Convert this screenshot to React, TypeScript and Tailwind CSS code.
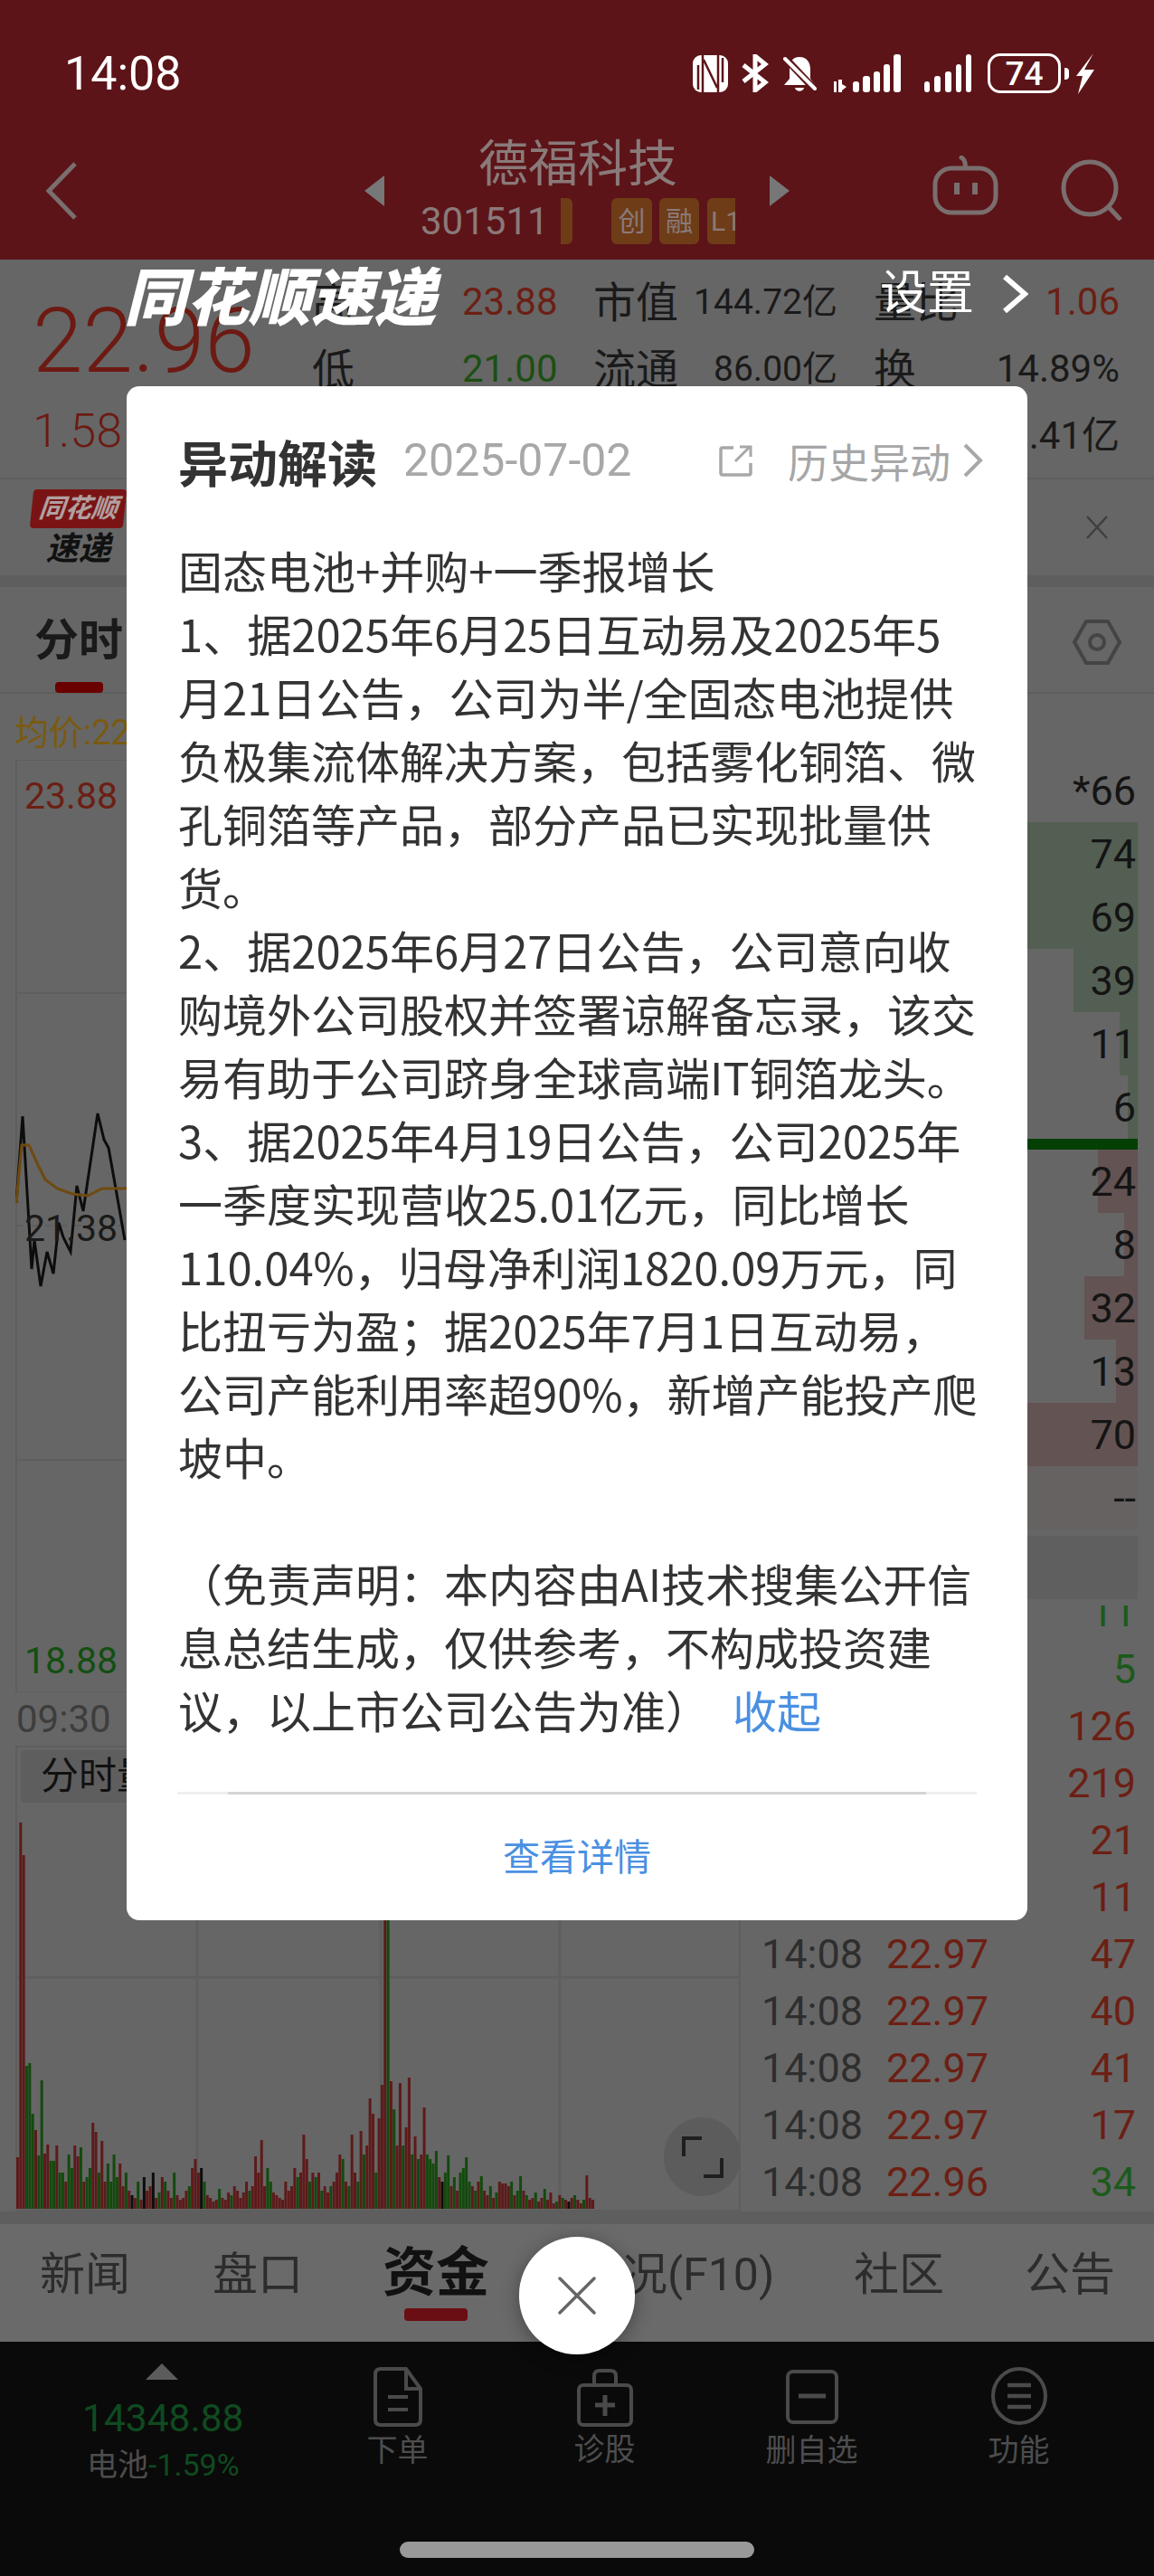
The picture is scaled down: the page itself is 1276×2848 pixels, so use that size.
import { X } from 'lucide-react';

const bookRows = [
  { v: '*66', w: 0, c: '' },
  { v: '74', w: 420, c: 'bg-[#535f52]' },
  { v: '69', w: 420, c: 'bg-[#535f52]' },
  { v: '39', w: 71, c: 'bg-[#535f52]' },
  { v: '11', w: 20, c: 'bg-[#535f52]' },
  { v: '6', w: 11, c: 'bg-[#535f52]' },
  { line: true, v: '', w: 0, c: '' },
  { v: '24', w: 44, c: 'bg-[#635352]' },
  { v: '8', w: 15, c: 'bg-[#635352]' },
  { v: '32', w: 59, c: 'bg-[#635352]' },
  { v: '13', w: 24, c: 'bg-[#635352]' },
  { v: '70', w: 420, c: 'bg-[#635352]' },
  { v: '--', w: 420, c: 'bg-[#666261]' },
];

const trades = [
  { v: '11', up: false },
  { v: '5', up: false },
  { v: '126', up: true },
  { v: '219', up: true },
  { v: '21', up: true },
  { v: '11', up: true },
  { t: '14:08', p: '22.97', v: '47', up: true },
  { t: '14:08', p: '22.97', v: '40', up: true },
  { t: '14:08', p: '22.97', v: '41', up: true },
  { t: '14:08', p: '22.97', v: '17', up: true },
  { t: '14:08', p: '22.96', v: '34', up: false },
];

// positive = red bar, negative = green bar
const vols = [
  57, 427, 391, -158, -161, -105, 87, -59, -142, 61, 71, -53, -53, 70, -40, -40, 30, -60, -45, 70,
  58, -68, 30, -35, -45, 95, 85, -40, 75, 30, -50, -30, -60, -35, 50, 25, -40, 20, 15, 12,
  -30, 10, 35, 20, 25, -40, 12, -18, 35, -30, 20, 12, -40, 15, 10, 12, 20, -25, 45, 55,
  40, 45, -30, 15, 12, 8, 10, -22, 12, 10, 18, -15, 25, 20, 12, 18, 30, -20, 25, 58,
  40, 76, 25, -45, -30, 18, 15, 12, 10, 30, 20, 25, 45, -35, 40, 82, 55, -30, 40, -35,
  40, -20, 25, 18, -25, 30, 40, 60, -55, 30, -25,
  82, 40, -30, 86, -60, 70, 122, 105, -40, 100, 137, 345, -345, 141, -110, 70,
  139, -70, 90, 145, -60, 80, -55, 60, 112, -60, -55, -50, -64, 35,
  30, -40, -59, 25, -35, 20, -40, -45, -57, -30, 25, -20, 30, -36, 20, 15, -25, 12, -18, 30,
  28, 28, 25, -30, 15, -20, -36, 20, -15, 10, 12, -18, 8, 12, -22, 10, 18, 6, -8, 15, -12, 10, 8, 12, -15, 10, 6, -10, 37, 12, 10,
];
const blackBars = [38, 42, 45, 61, 141, 183];

const bodyLines = [
  '固态电池+并购+一季报增长',
  '1、据2025年6月25日互动易及2025年5',
  '月21日公告，公司为半/全固态电池提供',
  '负极集流体解决方案，包括雾化铜箔、微',
  '孔铜箔等产品，部分产品已实现批量供',
  '货。',
  '2、据2025年6月27日公告，公司意向收',
  '购境外公司股权并签署谅解备忘录，该交',
  '易有助于公司跻身全球高端IT铜箔龙头。',
  '3、据2025年4月19日公告，公司2025年',
  '一季度实现营收25.01亿元，同比增长',
  '110.04%，归母净利润1820.09万元，同',
  '比扭亏为盈；据2025年7月1日互动易，',
  '公司产能利用率超90%，新增产能投产爬',
  '坡中。',
  '\u00a0',
  '（免责声明：本内容由AI技术搜集公开信',
  '息总结生成，仅供参考，不构成投资建',
];

const StatusIcons = () => (
  <div className="flex items-center">
    <svg width="39" height="41" viewBox="0 0 39 41">
      <rect x="0" y="0" width="39" height="41" rx="9" fill="#fff" />
      <path d="M11 0V41M28 0V41M12 5L27 36M6 11V38M33 3V30" stroke="#5c1418" strokeWidth="2.5" fill="none" />
    </svg>
    <svg className="ml-[15px]" width="30" height="42" viewBox="0 0 30 42">
      <path d="M2 12L26 31L15 40V2L26 11L2 30" stroke="#fff" strokeWidth="5" fill="none" />
    </svg>
    <svg className="ml-[16px]" width="37" height="42" viewBox="0 0 37 42">
      <path d="M18 3C10 3 7 9 7 17V27L1 34H35L30 27V17C30 9 26 3 18 3Z" fill="#fff" />
      <path d="M13 37H23C22 42 14 42 13 37Z" fill="#fff" />
      <path d="M1 3L36 40" stroke="#5c1418" strokeWidth="8" />
      <path d="M2 5L35 38" stroke="#fff" strokeWidth="4" strokeLinecap="round" />
    </svg>
    <svg className="ml-[19px]" width="74" height="42" viewBox="0 0 74 42">
      <rect x="0" y="30" width="3" height="12" fill="#fff" />
      <rect x="5" y="28" width="4" height="14" fill="#fff" />
      <path d="M9 33L14 36L9 40Z" fill="#fff" />
      <rect x="21" y="30" width="7" height="12" rx="3" fill="#fff" />
      <rect x="32" y="24" width="8" height="18" rx="3" fill="#fff" />
      <rect x="44" y="19" width="7" height="23" rx="3" fill="#fff" />
      <rect x="55" y="11" width="7" height="31" rx="3" fill="#fff" />
      <rect x="66" y="0" width="8" height="42" rx="3" fill="#fff" />
    </svg>
    <svg className="ml-[26px]" width="52" height="42" viewBox="0 0 52 42">
      <rect x="0" y="30" width="6" height="12" rx="3" fill="#fff" />
      <rect x="11" y="24" width="7" height="18" rx="3" fill="#fff" />
      <rect x="23" y="19" width="7" height="23" rx="3" fill="#fff" />
      <rect x="35" y="11" width="6" height="31" rx="3" fill="#fff" />
      <rect x="46" y="0" width="6" height="42" rx="3" fill="#fff" />
    </svg>
    <div className="ml-[18px] w-[81px] h-[44px] rounded-[14px] border-[3px] border-white flex items-center justify-center text-white text-[37px] font-medium leading-none">
      74
    </div>
    <div className="ml-[4px] w-[5px] h-[13px] rounded-r-sm bg-white" />
    <svg className="ml-[8px]" width="20" height="45" viewBox="0 0 20 45">
      <path d="M19 0L9 18H20L2 45L7 25H0Z" fill="#fff" />
    </svg>
  </div>
);

const Header = () => (
  <div className="h-[287px] bg-[#5c1418] flex flex-col">
    <div className="h-[105px] pt-[59px] pl-[71px] pr-[66px] flex items-center justify-between">
      <span className="text-white text-[52px] leading-none">14:08</span>
      <div className="-mt-[2px]">
        <StatusIcons />
      </div>
    </div>
    <div className="mt-[46px] flex items-center text-[#8a7a7a]">
      <svg className="ml-[50px]" width="36" height="64" viewBox="0 0 36 64">
        <path d="M33 2L4 32L33 62" stroke="#7a6e6e" strokeWidth="5" fill="none" />
      </svg>
      <div className="ml-[317px] w-0 h-0 border-y-[17px] border-y-transparent border-r-[22px] border-r-[#777]" />
      <div className="ml-[40px] w-[348px] flex flex-col items-center">
        <div className="text-[55px] leading-[60px] h-[60px]">德福科技</div>
        <div className="mt-[8px] h-[51px] w-full flex items-center text-[42px]">
          <span className="w-[137px] leading-none">301511</span>
          <div className="ml-[18px] w-[13px] h-[51px] rounded-r-md bg-[#6e3d18]" />
          <div className="ml-[43px] w-[45px] h-[51px] rounded-md bg-[#6e3d18] text-[30px] flex items-center justify-center">创</div>
          <div className="ml-[8px] w-[44px] h-[51px] rounded-md bg-[#6e3d18] text-[30px] flex items-center justify-center">融</div>
          <div className="ml-[9px] w-[31px] h-[51px] rounded-l-md bg-[#6e3d18] text-[30px] flex items-center pl-[4px] overflow-hidden">L1</div>
        </div>
      </div>
      <div className="ml-[38px] w-0 h-0 border-y-[17px] border-y-transparent border-l-[22px] border-l-[#777]" />
      <svg className="ml-[158px] -mt-[12px]" width="73" height="66" viewBox="0 0 73 66">
        <rect x="3" y="14" width="67" height="49" rx="18" stroke="#7a6e6e" strokeWidth="5" fill="none" />
        <path d="M30 1C35 3 37 8 36 14" stroke="#7a6e6e" strokeWidth="5" fill="none" />
        <rect x="24" y="30" width="6" height="13" fill="#7a6e6e" />
        <rect x="44" y="30" width="6" height="13" fill="#7a6e6e" />
      </svg>
      <svg className="ml-[69px] -mt-[2px]" width="68" height="68" viewBox="0 0 68 68">
        <circle cx="32" cy="32" r="29" stroke="#7a6e6e" strokeWidth="5" fill="none" />
        <path d="M53 53L66 67" stroke="#7a6e6e" strokeWidth="5" />
      </svg>
    </div>
  </div>
);

const QuoteRow = ({ a, b, bc, c, d, e, f }: { a: string; b: string; bc: string; c: string; d: string; e: string; f: string }) => (
  <div className="h-[74px] grid grid-cols-[166px_145px_110px_160px_40px_132px_140px] items-center text-[#1a1a1a]">
    <span className="text-[47px] leading-none">{a}</span>
    <span className={`text-[42px] leading-none ${bc}`}>{b}</span>
    <span className="text-[47px] leading-none">{c}</span>
    <span className="text-[39px] leading-none text-right whitespace-nowrap">{d}</span>
    <span />
    <span className="text-[47px] leading-none">{e}</span>
    <span className={`text-[42px] leading-none text-right ${a === '高' ? 'text-[#6c1f14]' : ''}`}>{f}</span>
  </div>
);

const Quote = () => (
  <div className="h-[243px] flex border-b-2 border-[#5e5e5e]">
    <div className="w-[345px] pl-[36px] pt-[40px] text-[#6c1a12]">
      <div className="text-[100px] leading-[100px] font-light">22.96</div>
      <div className="mt-[20px] text-[52px] leading-[60px] font-light">1.58</div>
    </div>
    <div className="pt-[10px]">
      <QuoteRow a="高" b="23.88" bc="text-[#6c1f14]" c="市值" d="144.72亿" e="量比" f="1.06" />
      <QuoteRow a="低" b="21.00" bc="text-[#1c4f14]" c="流通" d="86.00亿" e="换" f="14.89%" />
      <QuoteRow a="均" b="22.40" bc="text-[#6c1f14]" c="净资" d="9.62亿" e="额" f="3.41亿" />
    </div>
  </div>
);

const NewsBar = () => (
  <div className="h-[106px] flex items-center justify-between pl-[35px] pr-[50px]">
    <div className="w-[103px] flex flex-col items-center">
      <div className="w-[103px] h-[43px] rounded-[4px] bg-[#7a1414] -skew-x-6 flex items-center justify-center text-[#b0a0a0] text-[29px] font-bold italic leading-none">
        同花顺
      </div>
      <div className="mt-[5px] text-[#111] text-[36px] font-bold italic leading-none">速递</div>
    </div>
    <svg width="26" height="26" viewBox="0 0 26 26">
      <path d="M2 1L24 25M24 1L2 25" stroke="#3f3f3f" strokeWidth="2.5" />
    </svg>
  </div>
);

const Tabs = () => (
  <div className="h-[118px] border-b-2 border-[#5e5e5e] flex items-start justify-between pl-[38px] pr-[36px] pt-[33px]">
    <div className="flex flex-col items-center w-[98px]">
      <span className="text-[49px] leading-[54px] font-bold text-[#1a1a1a]">分时</span>
      <div className="mt-[18px] w-[53px] h-[12px] rounded-sm bg-[#6b0000]" />
    </div>
    <svg className="mt-[2px]" width="54" height="52" viewBox="0 0 54 52">
      <path d="M15 3H39L52 26L39 49H15L2 26Z" stroke="#444" strokeWidth="4" fill="none" />
      <circle cx="27" cy="26" r="8" stroke="#444" strokeWidth="4" fill="none" />
    </svg>
  </div>
);

const PriceChart = () => (
  <div className="relative w-[803px] h-[1031px] flex flex-col justify-between pl-[10px] pt-[17px] pb-[12px] text-[41px] leading-[46px]">
    <svg className="absolute inset-0" width="803" height="1031" viewBox="17 840 803 1031">
      <path d="M18 840H820V1871H18Z" stroke="#5e5e5e" strokeWidth="2" fill="none" />
      <path d="M18 1098H820M18 1614H820M219 840V1871M422 840V1871M620 840V1871" stroke="#5e5e5e" strokeWidth="2" fill="none" />
      <path d="M18 1355H820" stroke="#5e5e5e" strokeWidth="2" strokeDasharray="8 8" fill="none" />
      <polyline
        points="18,1330 25,1234 35,1403 38,1371 45,1422 52,1384 59,1408 65,1352 70,1368 78,1384 85,1311 92,1339 108,1231 115,1260 120,1269 128,1314 138,1371"
        stroke="#0d0d0d"
        strokeWidth="3"
        fill="none"
      />
      <polyline
        points="18,1330 24,1266 32,1266 42,1288 50,1304 63,1314 80,1320 97,1322 113,1314 140,1314"
        stroke="#6e4a10"
        strokeWidth="3"
        fill="none"
      />
    </svg>
    <span className="relative text-[#6c1f14]">23.88</span>
    <span className="relative text-[#1a1a1a]">21.38</span>
    <span className="relative text-[#134f13]">18.88</span>
  </div>
);

const VolumeChart = () => (
  <div className="relative w-[802px] h-[515px]">
    <svg className="absolute inset-0" width="802" height="515" viewBox="18 1930 802 515">
      <path d="M19 1931H819V2444H19Z" stroke="#5e5e5e" strokeWidth="2" fill="none" />
      <path d="M18 2186H820M219 1930V2445M422 1930V2445M620 1930V2445" stroke="#5e5e5e" strokeWidth="3" fill="none" />
      {vols.map((v, i) => (
        <rect
          key={i}
          x={19 + i * 3.33}
          y={2442 - Math.abs(v)}
          width="3"
          height={Math.abs(v)}
          fill={blackBars.includes(i) ? '#0d0d0d' : v > 0 ? '#5e1a1a' : '#134a0e'}
        />
      ))}
    </svg>
    <div className="absolute left-[6px] top-[5px] w-[180px] h-[58px] bg-[#5e5e5e] rounded-sm pl-[22px] flex items-center text-[42px] text-[#111] leading-none">
      分时量
    </div>
    <div className="absolute right-0 bottom-[17px] w-[85px] h-[87px] rounded-full bg-[#5c5c5c] flex items-center justify-center">
      <svg width="46" height="46" viewBox="0 0 46 46">
        <path d="M2 22V2H22M24 44H44V24" stroke="#1f1f1f" strokeWidth="4" fill="none" />
      </svg>
    </div>
  </div>
);

const OrderBook = () => (
  <div className="w-[420px] ml-[18px] flex flex-col">
    {bookRows.map((r, i) =>
      r.line ? (
        <div key={i} className="h-[12px] bg-[#043f04]" />
      ) : (
        <div key={i} className={`relative flex items-center justify-end pr-[2px] text-[45px] leading-none text-[#141414] ${i === 0 ? 'h-[69px]' : 'h-[70px]'}`}>
          <div className={`absolute right-0 inset-y-0 ${r.c}`} style={{ width: r.w }} />
          <span className="relative">{r.v}</span>
        </div>
      )
    )}
    <div className="h-[7px]" />
    <div className="h-[70px] bg-[#5f5f5f]" />
    <div className="mt-[7px] h-[668px] overflow-hidden">
      <div className="-mt-[24px]">
        {trades.map((t, i) => (
          <div key={i} className="h-[63px] flex items-center text-[45px] leading-none pl-[4px] pr-[2px]">
            {t.t && <span className="w-[138px] text-[#2e2e2e]">{t.t}</span>}
            {t.p && <span className="text-[#6c1f14]">{t.p}</span>}
            <span className={`ml-auto ${t.up ? 'text-[#6c1f14]' : 'text-[#1c5a1c]'}`}>{t.v}</span>
          </div>
        ))}
      </div>
    </div>
  </div>
);

const BottomTabs = () => (
  <div className="h-[130px] bg-[#6a6a6a] flex text-[#2c2c2c] text-[50px] leading-none">
    <span className="ml-[44px] w-[100px] mt-[31px]">新闻</span>
    <span className="ml-[91px] w-[100px] mt-[31px]">盘口</span>
    <div className="ml-[88px] w-[118px] mt-[24px] flex flex-col items-center">
      <span className="text-[59px] font-bold text-[#111]">资金</span>
      <div className="mt-[10px] w-[70px] h-[14px] rounded-sm bg-[#6b0e14]" />
    </div>
    <span className="ml-[97px] w-[218px] mt-[31px] whitespace-nowrap">概况(F10)</span>
    <span className="ml-[88px] w-[100px] mt-[31px]">社区</span>
    <span className="ml-[89px] w-[100px] mt-[31px]">公告</span>
  </div>
);

const BottomNav = () => (
  <div className="h-[259px] bg-[#0a0a0a]">
    <div className="h-[221px] flex text-[#4d4d4d]">
      <div className="w-[325px] pl-[91px] pt-[24px] flex flex-col">
        <div className="ml-[70px] w-0 h-0 border-x-[18px] border-x-transparent border-b-[18px] border-b-[#5c5c5c]" />
        <div className="mt-[19px] text-[42.5px] leading-[48px] text-[#0f4a20]">14348.88</div>
        <div className="mt-[9px] text-[34px] leading-[36px] whitespace-nowrap pl-[5px]">
          电池<span className="text-[#0f4a20]">-1.59%</span>
        </div>
      </div>
      <div className="w-[229px] flex flex-col items-center pt-[28px]">
        <svg width="54" height="66" viewBox="0 0 54 66">
          <path d="M8 2H36L52 24V58Q52 64 46 64H8Q2 64 2 58V8Q2 2 8 2Z" stroke="#4a4a4a" strokeWidth="4" fill="none" />
          <path d="M36 2V24H52M16 33H38M16 47H38" stroke="#4a4a4a" strokeWidth="4" fill="none" />
        </svg>
        <span className="mt-[6px] text-[34px] leading-[40px]">下单</span>
      </div>
      <div className="w-[229px] flex flex-col items-center pt-[30px]">
        <svg width="62" height="64" viewBox="0 0 62 64">
          <path d="M19 18V8Q19 2 25 2H37Q43 2 43 8V18" stroke="#4a4a4a" strokeWidth="4" fill="none" />
          <rect x="2" y="18" width="58" height="44" rx="5" stroke="#4a4a4a" strokeWidth="4" fill="none" />
          <path d="M31 29V52M20 40H42" stroke="#4a4a4a" strokeWidth="5" fill="none" />
        </svg>
        <span className="mt-[5px] text-[34px] leading-[40px]">诊股</span>
      </div>
      <div className="w-[229px] flex flex-col items-center pt-[31px]">
        <svg width="58" height="60" viewBox="0 0 58 60">
          <rect x="2" y="2" width="54" height="56" rx="6" stroke="#4a4a4a" strokeWidth="4" fill="none" />
          <path d="M14 29H44" stroke="#4a4a4a" strokeWidth="5" />
        </svg>
        <span className="mt-[9px] text-[34px] leading-[40px]">删自选</span>
      </div>
      <div className="w-[229px] flex flex-col items-center pt-[28px]">
        <svg width="62" height="64" viewBox="0 0 62 64">
          <ellipse cx="31" cy="32" rx="29" ry="30" stroke="#4a4a4a" strokeWidth="4" fill="none" />
          <path d="M18 20H44M18 32H44M18 44H44" stroke="#4a4a4a" strokeWidth="4.5" />
        </svg>
        <span className="mt-[8px] text-[34px] leading-[40px]">功能</span>
      </div>
    </div>
    <div className="mx-auto w-[392px] h-[18px] rounded-full bg-[#999]" />
  </div>
);

const Modal = () => (
  <div className="absolute left-[140px] top-[427px] w-[996px] h-[1696px] bg-white rounded-[14px] flex flex-col font-[family-name:'Noto_Sans_CJK_SC',sans-serif]">
    <div className="mt-[47px] h-[70px] pl-[57px] flex items-center">
      <span className="text-[55px] leading-none font-bold text-[#333]">异动解读</span>
      <span className="ml-[29px] w-[349px] text-[50px] leading-none text-[#a8a8a8] font-[family-name:Roboto,sans-serif]">2025-07-02</span>
      <svg width="37" height="35" viewBox="0 0 37 35">
        <path d="M16 3H4Q2 3 2 5V31Q2 33 4 33H33Q35 33 35 31V20" stroke="#a8a8a8" strokeWidth="3.5" fill="none" />
        <path d="M18 18L34 2M23 2H35V13" stroke="#a8a8a8" strokeWidth="3" fill="none" />
      </svg>
      <span className="ml-[39px] text-[45px] leading-none text-[#a6a6a6]">历史异动</span>
      <svg className="ml-[14px]" width="22" height="38" viewBox="0 0 22 38">
        <path d="M2 2L19 19L2 36" stroke="#a8a8a8" strokeWidth="4" fill="none" />
      </svg>
    </div>
    <div className="mt-[51px] pl-[57px] text-[49px] leading-[70px] text-[#333] whitespace-nowrap">
      {bodyLines.map((line, i) => (
        <div key={i}>{line}</div>
      ))}
      <div className="flex">
        <span>议，以上市公司公告为准）</span>
        <span className="ml-[25px] text-[49px] text-[#4a90e2]">收起</span>
      </div>
    </div>
    <div className="mt-[56px] mx-[56px] h-[3px] bg-[#efefef] flex justify-center">
      <div className="w-[772px] h-full bg-[#d4d4d4]" />
    </div>
    <div className="flex-1 pb-[6px] flex items-center justify-center text-[41px] leading-none text-[#4a90e2]">查看详情</div>
  </div>
);

export default function App() {
  return (
    <div className="relative w-[1276px] h-[2848px] overflow-hidden bg-[#666] font-[family-name:Roboto,'Noto_Sans_CJK_SC',sans-serif]">
      <Header />
      <Quote />
      <NewsBar />
      <div className="h-[13px] bg-[#5e5e5e]" />
      <Tabs />
      <div className="h-[73px] pl-[16px] pt-[12px] flex items-center text-[38px] leading-none text-[#7a5a10]">均价:22.40</div>
      <div className="flex">
        <div className="ml-[17px] w-[803px] flex flex-col">
          <PriceChart />
          <div className="h-[59px] pl-[1px] flex items-center text-[42px] leading-none text-[#3d3d3d]">09:30</div>
          <VolumeChart />
        </div>
        <OrderBook />
      </div>
      <div className="h-[14px] bg-[#5e5e5e]" />
      <BottomTabs />
      <BottomNav />

      {/* floating promo title + settings link */}
      <div className="absolute left-[137px] top-[290px] w-[1003px] h-[80px] flex items-center justify-between text-white">
        <span className="text-[69px] leading-none font-black italic">同花顺速递</span>
        <div className="flex items-center -mt-[10px]">
          <span className="text-[52px] leading-none">设置</span>
          <svg className="ml-[30px] mr-[3px]" width="30" height="44" viewBox="0 0 30 44">
            <path d="M4 3L26 22L4 41" stroke="#fff" strokeWidth="6" fill="none" />
          </svg>
        </div>
      </div>

      <Modal />

      <div className="absolute left-[574px] top-[2473px] w-[128px] h-[130px] rounded-full bg-white shadow-[0_4px_20px_rgba(0,0,0,0.35)] flex items-center justify-center text-[#666]">
        <X size={76} strokeWidth={3.5} absoluteStrokeWidth />
      </div>
    </div>
  );
}
